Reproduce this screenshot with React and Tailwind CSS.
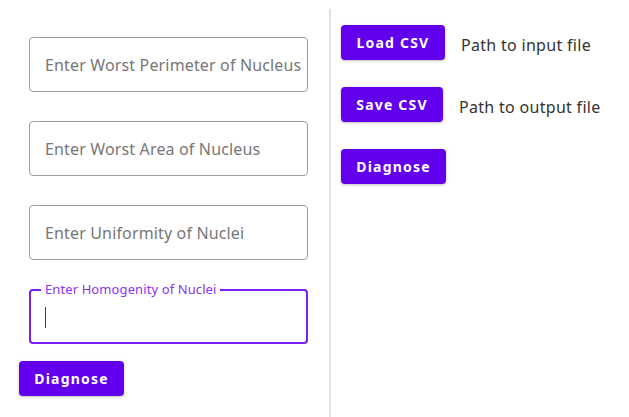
import React from "react";

const fields = [
  "Enter Worst Perimeter of Nucleus",
  "Enter Worst Area of Nucleus",
  "Enter Uniformity of Nuclei",
];

const Button = ({ children, className = "" }) => (
  <button
    type="button"
    className={`h-[35px] rounded-[4px] bg-[#6200ee] text-white text-[14px] font-bold tracking-[1.2px] shadow-[0_1px_3px_rgba(0,0,0,0.25)] flex items-center justify-center ${className}`}
  >
    {children}
  </button>
);

const App = () => {
  return (
    <div
      className="w-[629px] h-[417px] bg-white flex overflow-hidden"
      style={{ fontFamily: '"Noto Sans", "Open Sans", sans-serif' }}
    >
      {/* Left column: text fields */}
      <div className="w-[329px] shrink-0 pl-[19px] pt-[37px] flex flex-col">
        <div className="flex flex-col gap-[29px] ml-[10px] w-[279px]">
          {fields.map((f) => (
            <div
              key={f}
              className="h-[55px] rounded-[4px] border border-[#9e9e9e] flex items-center pl-[15px] text-[16px] tracking-[0.15px] text-[#777777] whitespace-nowrap overflow-hidden"
            >
              {f}
            </div>
          ))}

          {/* Focused field */}
          <div className="relative h-[55px] rounded-[4px] border-2 border-[#7a1ff5] flex items-center px-[14px]">
            <span className="absolute -top-[10px] left-[10px] bg-white px-[4px] text-[13px] leading-4 tracking-[0.1px] text-[#8a35f2]">
              Enter Homogenity of Nuclei
            </span>
            <span className="block w-px h-[21px] bg-[#5b16d8] mt-[2px]" />
          </div>
        </div>

        <Button className="mt-[17px] w-[105px]">Diagnose</Button>
      </div>

      {/* Divider */}
      <div className="w-[2px] mt-[9px] bg-[#e2e2e2]" />

      {/* Right column */}
      <div className="flex-1 pl-[10px] pt-[25px] flex flex-col gap-[27px]">
        <div className="flex items-center">
          <Button className="w-[104px]">Load CSV</Button>
          <span className="ml-4 pt-[4px] text-[16px] text-[#333333] tracking-[0.3px]">Path to input file</span>
        </div>
        <div className="flex items-center">
          <Button className="w-[102px]">Save CSV</Button>
          <span className="ml-4 pt-[4px] text-[16px] text-[#333333] tracking-[0.3px]">Path to output file</span>
        </div>
        <div className="flex items-center">
          <Button className="w-[105px]">Diagnose</Button>
        </div>
      </div>
    </div>
  );
};

export default App;
